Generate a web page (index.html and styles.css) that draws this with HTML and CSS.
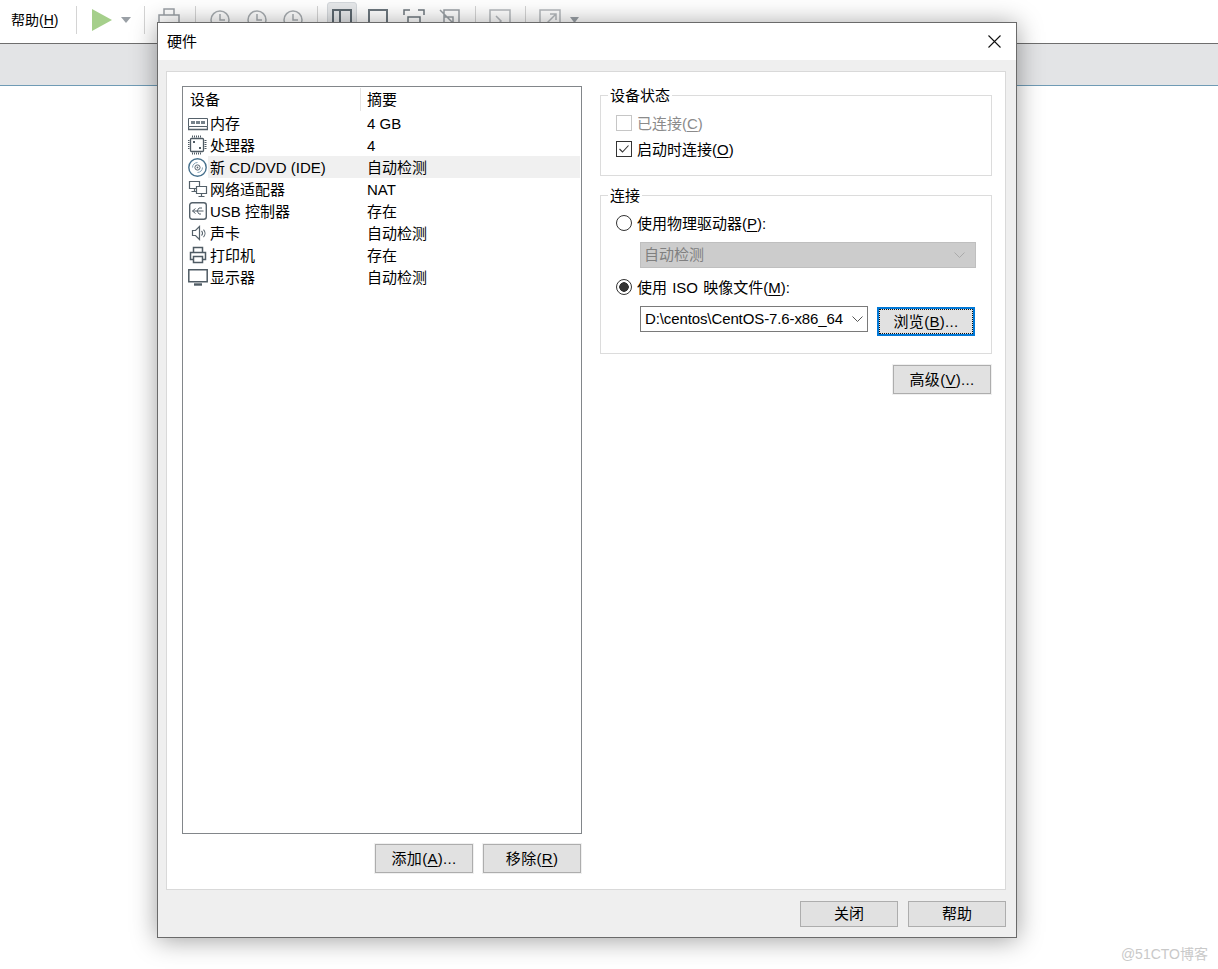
FILE: index.html
```html
<!DOCTYPE html>
<html lang="zh-CN">
<head>
<meta charset="utf-8">
<title>硬件</title>
<link rel="stylesheet" href="styles.css">
</head>
<body>
<header class="toolbar">
  <span class="menu">帮助(<u>H</u>)</span>
  <i class="sep sep-a"></i>
  <svg class="tool play" width="20" height="22" viewBox="0 0 20 22"><path d="M0 0L20 11L0 22Z" fill="#a5cf8b"/></svg>
  <svg class="tool caret-play" width="10" height="6" viewBox="0 0 10 6"><path d="M0 0H10L5 6Z" fill="#9aa0a6"/></svg>
  <i class="sep sep-b"></i>
  <svg class="tool snap" width="22" height="24" viewBox="0 0 22 24" fill="none" stroke="#9aa0a5" stroke-width="1.5"><path d="M6 1h10v6H6zM1 7h20v8H1zM11 15v8"/></svg>
  <i class="sep sep-c"></i>
  <svg class="tool clock1" width="20" height="22" viewBox="0 0 20 22" fill="none" stroke="#a9aeb2" stroke-width="1.5"><circle cx="10" cy="11" r="9"/><path d="M10 5v6h5"/></svg>
  <svg class="tool clock2" width="20" height="22" viewBox="0 0 20 22" fill="none" stroke="#a9aeb2" stroke-width="1.5"><circle cx="10" cy="11" r="9"/><path d="M10 5v6h5"/></svg>
  <svg class="tool clock3" width="20" height="22" viewBox="0 0 20 22" fill="none" stroke="#a9aeb2" stroke-width="1.5"><circle cx="10" cy="11" r="9"/><path d="M10 5v6h5"/></svg>
  <i class="sep sep-d"></i>
  <span class="tool-active"><svg width="20" height="22" viewBox="0 0 20 22" fill="none" stroke="#5d6870" stroke-width="2"><path d="M1 1h18v20H1zM8 1v20"/></svg></span>
  <svg class="tool view2" width="20" height="22" viewBox="0 0 20 22" fill="none" stroke="#6d777e" stroke-width="2"><path d="M1 1h18v20H1z"/></svg>
  <svg class="tool view3" width="22" height="22" viewBox="0 0 22 22" fill="none" stroke="#6d777e" stroke-width="1.5"><path d="M1 6V1h6M15 1h6v5M5 8h12v12H5z"/></svg>
  <svg class="tool view4" width="21" height="22" viewBox="0 0 21 22" fill="none" stroke="#9aa0a5" stroke-width="1.5"><path d="M5 1h15v20H5zM1 1l18 18M5 8h9v9"/></svg>
  <i class="sep sep-e"></i>
  <svg class="tool term" width="22" height="22" viewBox="0 0 22 22" fill="none" stroke="#b5b9bd" stroke-width="1.5"><path d="M1 1h20v20H1zM7 7l5 5-5 5"/></svg>
  <i class="sep sep-f"></i>
  <svg class="tool full" width="22" height="22" viewBox="0 0 22 22" fill="none" stroke="#b5b9bd" stroke-width="1.5"><path d="M1 1h20v20H1zM8 14l9-9M11 5h6v6"/></svg>
  <svg class="tool caret-full" width="9" height="6" viewBox="0 0 9 6"><path d="M0 0H9L4.500 6Z" fill="#9aa0a6"/></svg>
</header>
<div class="band"></div>

<section class="dialog">
  <div class="titlebar">
    <span>硬件</span>
    <svg class="close" width="13" height="13" viewBox="0 0 13 13" fill="none" stroke="#111" stroke-width="1.1"><path d="M.5.5l12 12M12.500.5l-12 12"/></svg>
  </div>
  <div class="dialog-body">
    <div class="panel">
      <div class="left">
        <div class="list">
          <div class="list-head"><span class="head-name">设备</span><span class="head-value">摘要</span></div>

          <div class="row">
            <svg class="ico" width="20" height="20" viewBox="0 0 20 20" fill="none" stroke="#55616a"><path d="M.5 5.500h19v8H.5z"/><path d="M.5 13.500v3h19v-3" stroke-width="1.400"/><path d="M3 8h4v3H3zM8 8h4v3H8zM13 8h4v3h-4z" fill="#77838b" stroke="none"/></svg>
            <span class="cell-name">内存</span><span class="cell-value">4 GB</span>
          </div>
          <div class="row">
            <svg class="ico" width="20" height="20" viewBox="0 0 20 20" fill="none" stroke="#4f5b64"><rect x="2.500" y="3.500" width="13" height="13" rx="1" stroke-width="1.300"/><path d="M4 1.500h10M4 18.500h10" stroke-width="2" stroke-dasharray="1 1"/><path d="M.5 5v10M17.500 5v10" stroke-width="2" stroke-dasharray="1 1"/><path d="M5 6h2v2H5zM11 12h2v2h-2z" fill="#4f5b64" stroke="none"/></svg>
            <span class="cell-name">处理器</span><span class="cell-value">4</span>
          </div>
          <div class="row row-selected">
            <svg class="ico" width="20" height="20" viewBox="0 0 20 20" fill="none" stroke="#46708c"><circle cx="9.500" cy="10.500" r="8.700" stroke-width="1.400"/><circle cx="9.500" cy="10.500" r="2.600" stroke="#5b6670"/><circle cx="9.500" cy="10.500" r=".9" fill="#5b6670" stroke="none"/><path d="M4.500 10.500a5 5 0 0 1 5-5M14.500 10.500a5 5 0 0 1-5 5" stroke="#86a2b5"/></svg>
            <span class="cell-name">新 CD/DVD (IDE)</span><span class="cell-value">自动检测</span>
          </div>
          <div class="row">
            <svg class="ico" width="20" height="20" viewBox="0 0 20 20" fill="none" stroke="#55616a" stroke-width="1.200"><path d="M1.500 2.500h10v7h-10zM6.500 9.500v3M3.500 12.500h5"/><path d="M8.500 7.500h10v7h-10z" fill="#fff"/><path d="M13.500 14.500v3M10.500 17.500h6"/></svg>
            <span class="cell-name">网络适配器</span><span class="cell-value">NAT</span>
          </div>
          <div class="row">
            <svg class="ico" width="20" height="20" viewBox="0 0 20 20" fill="none" stroke="#55616a"><rect x="1.700" y="1.700" width="16.600" height="16.600" rx="2.500" stroke-width="1.400"/><path d="M4.500 10h11M4.500 10l3-2.500M4.500 10l3 2.500M9 10l2-3h3M9 10l2 3h2"/></svg>
            <span class="cell-name">USB 控制器</span><span class="cell-value">存在</span>
          </div>
          <div class="row">
            <svg class="ico" width="20" height="20" viewBox="0 0 20 20" fill="none" stroke="#55616a"><path d="M4.500 7.500h3l4-4v13l-4-4h-3z" stroke-width="1.200"/><path d="M13.500 8a3 3 0 0 1 0 4.500M15.500 6.500a5.500 5.500 0 0 1 0 7.500" stroke-width="1.100"/></svg>
            <span class="cell-name">声卡</span><span class="cell-value">自动检测</span>
          </div>
          <div class="row">
            <svg class="ico" width="20" height="20" viewBox="0 0 20 20" fill="none" stroke="#4f5b64" stroke-width="1.500"><path d="M5.500 7V2.500h9V7M5.500 14.500h-3v-7h15v7h-3M5.500 11.500h9v6h-9z"/></svg>
            <span class="cell-name">打印机</span><span class="cell-value">存在</span>
          </div>
          <div class="row">
            <svg class="ico" width="20" height="20" viewBox="0 0 20 20" fill="none" stroke="#4f5b64" stroke-width="1.500"><path d="M.8 2.800h18.400v12H.8z"/><path d="M6 17.500h8" stroke-width="2.400"/></svg>
            <span class="cell-name">显示器</span><span class="cell-value">自动检测</span>
          </div>
        </div>
        <div class="left-actions">
          <span class="btn">添加(<u>A</u>)...</span>
          <span class="btn">移除(<u>R</u>)</span>
        </div>
      </div>

      <div class="right">
        <fieldset class="group group-status">
          <legend>设备状态</legend>
          <div class="opt opt-disabled"><span class="check"></span><span class="opt-text">已连接(<u>C</u>)</span></div>
          <div class="opt"><span class="check check-on"><svg width="14" height="14" viewBox="0 0 14 14" fill="none" stroke="#333" stroke-width="1.100"><path d="M2.500 7l3 3 6-6.500"/></svg></span><span class="opt-text">启动时连接(<u>O</u>)</span></div>
        </fieldset>
        <fieldset class="group group-conn">
          <legend>连接</legend>
          <div class="opt"><span class="radio"></span><span class="opt-text">使用物理驱动器(<u>P</u>):</span></div>
          <div class="select select-disabled">
            <span>自动检测</span>
            <svg width="11" height="6" viewBox="0 0 11 6" fill="none" stroke="#aaa"><path d="M.5.500l5 5 5-5"/></svg>
          </div>
          <div class="opt opt-iso"><span class="radio radio-on"></span><span class="opt-text">使用 ISO 映像文件(<u>M</u>):</span></div>
          <div class="file-row">
            <div class="select select-file">
              <span class="file-path">D:\centos\CentOS-7.6-x86_64</span>
              <svg width="11" height="6" viewBox="0 0 11 6" fill="none" stroke="#555"><path d="M.5.500l5 5 5-5"/></svg>
            </div>
            <span class="btn btn-focus"><span class="focus-ring">浏览(<u>B</u>)...</span></span>
          </div>
        </fieldset>
        <span class="btn btn-advanced">高级(<u>V</u>)...</span>
      </div>
    </div>
    <div class="footer">
      <span class="btn btn-footer">关闭</span>
      <span class="btn btn-footer">帮助</span>
    </div>
  </div>
</section>

<div class="watermark">@51CTO博客</div>
</body>
</html>
```
FILE: styles.css
```css
* { box-sizing: border-box; }
html, body { margin: 0; height: 100%; }
body {
  background: #fff;
  color: #000;
  font: 15px/20px "Liberation Sans", "Noto Sans CJK SC", sans-serif;
  overflow: hidden;
}
u { text-underline-offset: 2px; }

/* app behind the dialog */
.toolbar {
  display: flex;
  align-items: center;
  height: 44px;
  padding: 0 0 4px 11px;
  border-bottom: 1px solid #6e6e6e;
  position: relative;
}
.menu { font-size: 14px; width: 52px; white-space: nowrap; }
.sep { width: 1px; height: 28px; background: #d4d4d4; flex: none; }
.tool { flex: none; }
.sep-a { margin-left: 13px; }
.play { margin-left: 15px; }
.caret-play { margin-left: 9px; }
.sep-b { margin-left: 13px; }
.snap { margin-left: 13px; }
.sep-c { margin-left: 15px; }
.clock1 { margin-left: 14px; }
.clock2 { margin-left: 17px; }
.clock3 { margin-left: 16px; }
.sep-d { margin-left: 14px; }
.tool-active {
  display: flex;
  align-items: center;
  justify-content: center;
  width: 30px;
  height: 36px;
  margin-left: 9px;
  background: #e6e8ea;
  border: 1px solid #d4d8dc;
  border-radius: 3px;
  flex: none;
}
.view2 { margin-left: 11px; }
.view3 { margin-left: 15px; }
.view4 { margin-left: 14px; }
.sep-e { margin-left: 15px; }
.term { margin-left: 13px; }
.sep-f { margin-left: 14px; }
.full { margin-left: 13px; }
.caret-full { margin-left: 9px; }
.band {
  height: 42px;
  background: #e3e4e6;
  border-bottom: 1px solid #6f9bb5;
}

/* dialog window */
.dialog {
  position: absolute;
  left: 157px;
  top: 22px;
  width: 860px;
  height: 916px;
  display: flex;
  flex-direction: column;
  background: #efefef;
  border: 1px solid #6a6a6a;
  box-shadow: 0 2px 24px rgba(0, 0, 0, .38);
}
.titlebar {
  display: flex;
  align-items: center;
  justify-content: space-between;
  flex: none;
  height: 37px;
  padding: 0 15px 0 9px;
  background: #fff;
}
.dialog-body {
  flex: 1;
  display: flex;
  flex-direction: column;
  padding: 11px 10px 0 8px;
}
.panel {
  display: grid;
  grid-template-columns: 400px 392px;
  column-gap: 18px;
  height: 819px;
  padding: 14px 13px 0 15px;
  background: #fff;
  border: 1px solid #d9d9d9;
}
.left { display: flex; flex-direction: column; }
.list {
  height: 748px;
  border: 1px solid #82868a;
  background: #fff;
}
.list-head {
  display: flex;
  align-items: center;
  height: 25px;
}
.head-name { width: 178px; height: 23px; padding-left: 7px; border-right: 1px solid #e3e3e3; line-height: 24px; }
.head-value { height: 23px; padding-left: 6px; line-height: 24px; }
.row {
  display: flex;
  align-items: center;
  height: 22px;
  padding-left: 5px;
}
.ico { flex: none; width: 20px; height: 20px; }
.cell-name { width: 152px; height: 22px; padding-left: 2px; line-height: 23px; white-space: nowrap; }
.cell-value { flex: 1; height: 22px; padding-left: 7px; line-height: 23px; }
.row-selected .cell-name,
.row-selected .cell-value { background: #f0f0f0; }
.row-selected .cell-value { margin-right: 1px; }
.left-actions {
  display: flex;
  justify-content: flex-end;
  gap: 10px;
  margin: 10px 1px 0 0;
}

/* buttons */
.btn {
  display: flex;
  align-items: center;
  justify-content: center;
  flex: none;
  width: 98px;
  height: 29px;
  padding-top: 1px;
  background: #e1e1e1;
  border: 1px solid #adadad;
  box-shadow: 0 0 0 1px #f0f0f0;
  white-space: nowrap;
  letter-spacing: .3px;
}
.btn-advanced { align-self: flex-end; margin: 11px 1px 0 0; }
.btn-footer { height: 26px; padding-top: 0; box-shadow: none; letter-spacing: 0; }
.btn-focus {
  margin: 1px 0 0 9px;
  padding-top: 0;
  border: 2px solid #0078d7;
  box-shadow: none;
}
.focus-ring {
  display: flex;
  align-items: center;
  justify-content: center;
  width: 100%;
  height: 100%;
  border: 1px dotted #111;
}
.footer {
  display: flex;
  justify-content: flex-end;
  gap: 10px;
  padding-top: 11px;
}

/* right column */
.right { display: flex; flex-direction: column; align-items: stretch; }
.group {
  margin: 0;
  min-width: 0;
  border: 1px solid #dcdcdc;
}
.group legend {
  height: 18px;
  margin-left: -8px;
  padding: 0 2px;
  line-height: 19px;
}
.group-status { height: 90px; padding: 6px 0 0 15px; }
.group-conn { height: 168px; margin-top: 10px; padding: 6px 15px 0 15px; }
.opt {
  display: flex;
  align-items: center;
  height: 26px;
  white-space: nowrap;
}
.opt-text { padding-top: 1px; }
.opt-disabled { color: #8b8b8b; }
.opt-iso { margin-top: 6px; word-spacing: 1px; }
.check {
  display: flex;
  align-items: center;
  justify-content: center;
  flex: none;
  width: 16px;
  height: 16px;
  margin-right: 5px;
  border: 1px solid #c6c6c6;
  background: #fff;
}
.check-on { border-color: #333; }
.radio {
  flex: none;
  width: 16px;
  height: 16px;
  margin-right: 5px;
  border: 1px solid #333;
  border-radius: 50%;
  background: #fff;
}
.radio-on {
  background: radial-gradient(circle, #333 0 4.500px, #fff 5px);
}
.select {
  display: flex;
  align-items: center;
  justify-content: space-between;
  height: 26px;
  white-space: nowrap;
}
.select-disabled {
  width: 336px;
  margin: 6px 0 0 24px;
  padding: 0 10px 0 3px;
  background: #cccccc;
  border: 1px solid #bfbfbf;
  color: #808080;
}
.select-file {
  width: 228px;
  padding: 0 4px 0 4px;
  border: 1px solid #7a7a7a;
  background: #fff;
}
.file-path { letter-spacing: -.11px; }
.file-row {
  display: flex;
  align-items: flex-start;
  margin: 6px 0 0 24px;
}

.watermark {
  position: absolute;
  right: 10px;
  bottom: 6px;
  font-size: 14px;
  line-height: 18px;
  color: #c9c9c9;
}
```
